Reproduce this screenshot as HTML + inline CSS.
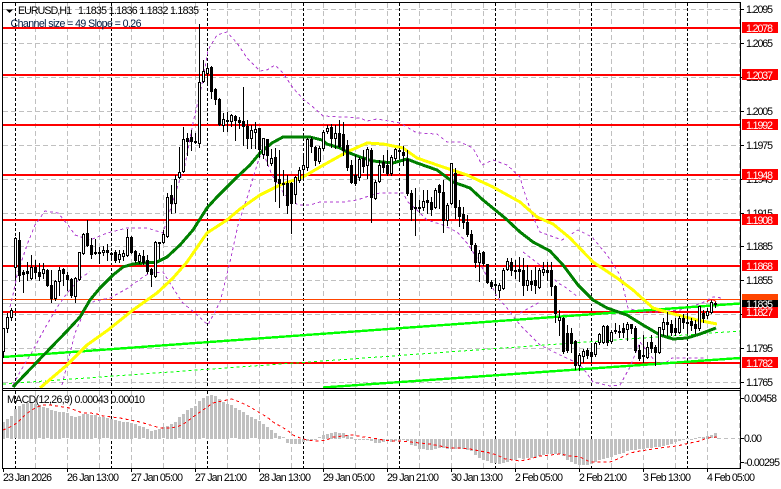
<!DOCTYPE html>
<html><head><meta charset="utf-8"><style>
html,body{margin:0;padding:0;background:#fff;width:781px;height:489px;overflow:hidden}
svg{display:block;font-family:"Liberation Sans",sans-serif;font-size:10.6px}
</style></head><body>
<svg id="s" width="781" height="489" viewBox="0 0 781 489" xmlns="http://www.w3.org/2000/svg">
<rect width="781" height="489" fill="#fff"/>
<g id="grid" shape-rendering="crispEdges"></g>
<g fill="#f00" shape-rendering="crispEdges">
<rect x="3" y="27" width="738" height="2"/><rect x="3" y="74" width="738" height="2"/>
<rect x="3" y="124" width="738" height="2"/><rect x="3" y="174" width="738" height="2"/>
<rect x="3" y="219" width="738" height="2"/><rect x="3" y="265" width="738" height="2"/>
<rect x="3" y="311" width="738" height="2"/><rect x="3" y="362" width="738" height="2"/>
</g>
<rect x="3" y="299" width="737" height="1" fill="#ff4500" shape-rendering="crispEdges"/>
<rect x="3" y="303" width="737" height="1" fill="#c0c0c0" shape-rendering="crispEdges"/>
<g fill="none" stroke="#b03fd0" stroke-width="1" stroke-dasharray="3 3" shape-rendering="crispEdges">
<polyline points="10,307 13,295 17,275 27,245 35,225 45,211 58,213 68,225 75,235 90,240 107,233 127,228 147,228 163,233 177,188 185,165 193,123 203,80 208,50 217,35 227,32 237,43 247,58 260,71 267,70 275,65 283,73 293,88 303,99 313,107 323,116 343,117 360,118 367,121 377,119 400,123 417,133 437,134 447,142 460,142 473,148 482,165 493,160 507,165 520,177 523,188 533,217 540,232 562,240 578,230 592,237 607,255 620,275 625,295 628,308 640,312 660,312 680,310 702,303 713,297 722,298"/>
<polyline points="13,385 20,372 32,352 45,328 58,306 68,292 80,278 90,272"/>
<polyline points="62,385 75,333 87,305 95,301 110,298 128,288 143,277 150,273 163,272 173,288 182,302 197,315 208,325 220,302 230,262 238,225 248,195 257,165 262,150 272,175 285,195 298,205 310,205 320,202 343,202 357,200 372,195 380,193 403,193 408,202 417,210 427,220 443,225 457,232 467,243 477,258 490,282 497,297 507,308 520,325 540,345 560,355 575,362 583,368 593,382 610,386 620,385 630,367 640,342 650,355 657,363 667,362 672,358 693,358 705,358"/>
<polyline points="523,252 540,265 558,283 565,287 578,297"/>
<polyline points="520,313 540,302"/>
</g>
<g fill="none" stroke="#00ff00" shape-rendering="crispEdges">
<line x1="3" y1="357" x2="740" y2="303.5" stroke-width="2.4"/>
<line x1="323" y1="387.5" x2="740" y2="358" stroke-width="2.4"/>
<line x1="3" y1="384" x2="740" y2="331" stroke-width="1" stroke-dasharray="3 3"/>
</g>
<polyline fill="none" stroke="#ffff00" stroke-width="3" shape-rendering="crispEdges" points="40,388 67,365 87,345 108,330 133,310 157,293 173,278 187,262 207,233 227,220 240,209 260,195 280,185 303,177 320,167 347,152 367,143 383,144 403,148 417,158 440,166 467,175 493,187 520,202 537,217 553,224 570,238 593,262 617,278 633,290 653,308 670,313 697,320 717,324"/>
<polyline fill="none" stroke="#008000" stroke-width="3" shape-rendering="crispEdges" points="13,387 37,362 67,331 80,317 90,300 100,288 113,275 123,267 133,264 157,262 167,257 180,245 193,230 207,208 217,197 237,177 250,165 260,153 272,143 283,137 310,137 322,140 327,144 340,148 347,152 360,157 373,161 393,163 407,159 417,163 437,170 453,182 470,188 483,200 505,218 520,232 533,242 550,251 563,265 578,285 593,300 607,308 627,315 643,325 660,335 673,339 687,338 700,334 716,328"/>
<g id="candles" shape-rendering="crispEdges"></g>
<path d="M707 302 A5 4 0 0 1 716 302" fill="none" stroke="#f00" stroke-width="1"/>
<g id="macd" shape-rendering="crispEdges"></g>
<line x1="717" y1="438.5" x2="740" y2="438.5" stroke="#c0c0c0" stroke-dasharray="4 3" shape-rendering="crispEdges"/>
<polyline fill="none" stroke="#f00" stroke-width="1" stroke-dasharray="3 3" shape-rendering="crispEdges" points="3,430 10,427 17,423 23,417 30,411 37,407 43,405 50,405 57,406 63,407 70,408 77,411 83,413 90,413 97,414 103,416 112,417 120,418 130,420 140,422 150,425 160,428 167,428 177,427 185,423 193,417 203,410 213,403 222,401 232,399 242,403 250,407 260,413 267,417 273,422 280,426 287,430 293,435 300,438 307,440 317,441 327,440 333,437 343,436 353,435 363,437 373,438 383,440 393,441 400,441 410,442 420,443 430,444 440,446 450,448 460,448 470,449 480,451 490,453 497,455 505,459 513,460 520,461 530,459 540,456 550,455 560,454 570,456 580,457 590,462 600,462 610,462 620,458 630,453 640,451 653,449 667,447 677,446 690,443 700,441 707,438 717,437"/>
<g fill="#000" shape-rendering="crispEdges">
<rect x="2" y="2" width="739" height="1"/><rect x="2" y="2" width="1" height="467"/>
<rect x="740" y="2" width="1" height="467"/><rect x="2" y="388" width="739" height="1"/>
<rect x="2" y="390" width="739" height="1"/><rect x="2" y="468" width="739" height="1"/>
</g>
<g id="ticks" fill="#000" shape-rendering="crispEdges"></g>
<polygon points="6,9.5 13,9.5 9.5,13" fill="#000"/>
<g fill="#000">
<text x="18" y="14" textLength="54" lengthAdjust="spacing">EURUSD,H1</text>
<text x="78" y="14" textLength="121" lengthAdjust="spacing">1.1835 1.1836 1.1832 1.1835</text>
<text x="10.5" y="27" textLength="131" lengthAdjust="spacing" fill="#001a40">Channel size = 49 Slope = 0.26</text>
<text x="7" y="403" textLength="138" lengthAdjust="spacing">MACD(12,26,9) 0.00043 0.00010</text>
<text x="746" y="13" textLength="27">1.2095</text>
<text x="746" y="47" textLength="27">1.2065</text>
<text x="746" y="81" textLength="27">1.2035</text>
<text x="746" y="115" textLength="27">1.2005</text>
<text x="746" y="149" textLength="27">1.1975</text>
<text x="746" y="183" textLength="27">1.1945</text>
<text x="746" y="217" textLength="27">1.1915</text>
<text x="746" y="250" textLength="27">1.1885</text>
<text x="746" y="284" textLength="27">1.1855</text>
<text x="746" y="352" textLength="27">1.1795</text>
<text x="746" y="386" textLength="27">1.1765</text>
<text x="744" y="402" textLength="33">0.00458</text>
<text x="744" y="442" textLength="18">0.00</text>
<text x="744" y="466" textLength="36">-0.00295</text>
<text x="3" y="481" textLength="49">23 Jan 2026</text>
<text x="67" y="481" textLength="52">26 Jan 13:00</text>
<text x="131" y="481" textLength="52">27 Jan 05:00</text>
<text x="195" y="481" textLength="52">27 Jan 21:00</text>
<text x="259" y="481" textLength="52">28 Jan 13:00</text>
<text x="323" y="481" textLength="52">29 Jan 05:00</text>
<text x="387" y="481" textLength="52">29 Jan 21:00</text>
<text x="451" y="481" textLength="52">30 Jan 13:00</text>
<text x="515" y="481" textLength="48">2 Feb 05:00</text>
<text x="579" y="481" textLength="48">2 Feb 21:00</text>
<text x="643" y="481" textLength="48">3 Feb 13:00</text>
<text x="707" y="481" textLength="48">4 Feb 05:00</text>
</g>
<g shape-rendering="crispEdges">
<rect x="742" y="294" width="36" height="7" fill="#ff4500"/>
<rect x="742" y="300" width="36" height="9" fill="#000"/>
<rect x="742" y="22" width="36" height="11" fill="#f00"/>
<rect x="742" y="69" width="36" height="11" fill="#f00"/>
<rect x="742" y="119" width="36" height="11" fill="#f00"/>
<rect x="742" y="169" width="36" height="11" fill="#f00"/>
<rect x="742" y="214" width="36" height="11" fill="#f00"/>
<rect x="742" y="260" width="36" height="11" fill="#f00"/>
<rect x="742" y="307" width="36" height="11" fill="#f00"/>
<rect x="742" y="357" width="36" height="11" fill="#f00"/>
</g>
<g fill="#fff">
<text x="746" y="308" textLength="27">1.1835</text>
<text x="746" y="32" textLength="27">1.2078</text>
<text x="746" y="79" textLength="27">1.2037</text>
<text x="746" y="129" textLength="27">1.1992</text>
<text x="746" y="179" textLength="27">1.1948</text>
<text x="746" y="224" textLength="27">1.1908</text>
<text x="746" y="270" textLength="27">1.1868</text>
<text x="746" y="316" textLength="27">1.1827</text>
<text x="746" y="367" textLength="27">1.1782</text>
</g>
</svg>
<script>
var NS="http://www.w3.org/2000/svg";
function el(p,t,a){var e=document.createElementNS(NS,t);for(var k in a)e.setAttribute(k,a[k]);document.getElementById(p).appendChild(e);return e}
[9,43,77,111,145,179,213,246,280,314,348,382].forEach(function(y){el("grid","line",{x1:3,x2:740,y1:y+.5,y2:y+.5,stroke:"#c0c0c0","stroke-dasharray":"5 3"});el("ticks","rect",{x:741,y:y,width:3,height:1})});
[[398],[438],[462]].forEach(function(a){el("ticks","rect",{x:741,y:a[0],width:3,height:1})});
for(var x=35;x<740;x+=32){if((x-15)%96==0)continue;el("grid","line",{x1:x+.5,x2:x+.5,y1:3,y2:388,stroke:"#c0c0c0","stroke-dasharray":"5 3"});el("grid","line",{x1:x+.5,x2:x+.5,y1:391,y2:468,stroke:"#c0c0c0","stroke-dasharray":"5 3"})}
for(var x=3;x<740;x+=64){el("ticks","rect",{x:x,y:469,width:1,height:3})}
for(var x=15;x<740;x+=96){el("grid","line",{x1:x+.5,x2:x+.5,y1:3,y2:388,stroke:"#000","stroke-dasharray":"3 2"});el("grid","line",{x1:x+.5,x2:x+.5,y1:391,y2:468,stroke:"#000","stroke-dasharray":"3 2"})}
var C="328,328,351,357,1;313,317,328,332,1;308,310,317,320,1;237,238,267,278,1;232,240,275,281,0;270,272,274,292,0;262,271,273,280,0;255,267,278,279,1;260,267,272,278,0;263,272,276,280,0;263,269,273,278,1;269,270,285,286,0;270,285,298,302,0;280,281,298,300,1;267,270,281,295,1;268,269,273,285,0;272,275,279,290,0;278,279,295,297,0;277,278,296,302,1;252,252,279,280,1;233,234,253,254,1;220,233,245,246,0;238,245,254,258,0;239,252,253,254,0;247,252,253,263,0;246,250,252,255,1;244,250,252,260,0;252,253,254,260,0;250,252,260,262,0;250,254,259,262,1;250,253,256,260,1;229,237,255,256,1;236,237,252,253,0;250,251,260,262,0;253,255,261,263,1;250,256,262,264,0;255,260,271,273,0;268,269,274,286,0;241,242,276,277,1;242,242,243,258,1;230,234,242,243,1;193,197,236,237,1;185,195,203,213,0;175,179,203,212,1;147,172,177,178,1;127,139,171,172,1;133,138,141,155,0;130,137,141,150,0;133,141,142,143,0;24,82,143,147,1;60,71,81,82,1;65,68,73,85,1;66,67,91,98,0;88,89,99,104,0;98,99,124,125,0;113,119,125,131,1;112,120,121,131,0;114,115,121,126,1;115,116,120,140,0;117,120,122,128,0;87,121,126,145,0;120,126,138,148,0;125,130,138,148,1;122,129,132,148,1;128,128,149,157,0;138,138,154,158,1;139,139,155,165,0;149,158,163,165,1;148,157,181,201,0;150,179,183,207,0;170,183,184,195,1;175,183,205,213,0;182,183,203,233,0;176,177,194,203,1;167,170,180,182,1;153,165,169,180,1;138,139,167,170,1;137,139,146,152,0;146,147,160,165,0;146,148,161,163,1;130,132,148,150,1;125,128,131,133,1;124,127,138,147,0;125,133,138,148,1;120,133,146,147,0;122,134,150,155,0;140,145,167,170,0;160,165,182,183,0;155,175,183,185,0;157,159,177,180,1;150,158,166,172,0;147,149,165,178,1;148,150,197,222,0;180,182,198,199,1;160,165,181,182,1;155,162,167,172,0;150,165,173,175,0;155,157,173,175,1;148,149,158,160,1;148,150,151,158,1;146,152,155,165,0;150,159,193,195,0;190,193,209,220,0;188,207,208,235,0;200,207,208,212,0;190,201,207,210,1;190,200,202,213,0;197,202,209,215,0;188,190,207,208,1;184,185,192,208,0;180,192,220,232,0;203,205,220,225,1;163,163,203,204,1;168,173,207,218,0;200,207,216,226,0;207,214,222,228,0;215,222,234,236,0;230,234,244,250,0;243,245,262,267,0;250,253,262,281,1;251,252,263,265,0;264,264,282,283,0;280,282,286,288,0;278,284,285,293,0;283,285,290,297,1;268,270,288,289,1;258,261,269,270,1;258,262,270,275,0;260,270,271,278,0;257,269,271,281,0;258,270,285,295,0;265,280,285,290,1;270,281,284,290,0;267,280,285,293,0;268,270,287,288,1;262,269,272,275,1;262,270,272,280,0;262,270,286,295,0;285,286,313,322,0;310,317,320,335,1;317,318,351,353,0;325,333,350,352,0;328,333,343,352,0;340,341,365,369,0;353,355,365,370,1;349,351,356,362,1;348,350,355,358,0;345,352,356,362,0;342,343,354,356,1;333,334,342,344,1;325,326,342,343,1;325,326,342,345,0;330,332,341,343,1;323,330,331,333,0;325,331,332,337,0;323,328,332,337,0;322,324,329,340,1;324,324,328,333,0;326,328,350,352,0;345,350,358,360,0;335,355,356,362,0;342,347,357,358,1;335,342,348,352,0;345,347,352,365,0;327,327,352,353,1;318,322,329,335,1;312,322,324,335,0;320,324,332,335,0;318,328,332,335,0;316,318,332,333,1;314,318,322,328,0;313,322,323,333,0;318,321,325,330,0;320,324,328,333,0;306,306,328,330,1;310,313,318,322,0;308,311,315,318,1;300,302,312,313,1;301,303,304,307,0";
C.split(";").forEach(function(r,i){var d=r.split(",").map(Number),x=3+4*i;
el("candles","rect",{x:x,y:d[0],width:1,height:d[3]-d[0]+1,fill:"#000"});
el("candles","rect",{x:x-1,y:d[1],width:3,height:Math.max(d[2]-d[1]+1,1),fill:"#000"});
if(d[4]&&d[2]-d[1]>1)el("candles","rect",{x:x,y:d[1]+1,width:1,height:d[2]-d[1]-1,fill:"#fff"});
});
var M=[275,268,258,238,228,222,218,218,222,226,230,235,240,243,245,247,250,257,260,257,252,252,254,256,260,262,265,266,270,273,276,275,278,283,288,292,297,303,300,297,292,288,282,275,262,252,240,234,228,213,205,197,195,198,206,215,222,226,235,240,246,255,262,268,272,
282,290,300,310,318,322,338,342,342,342,336,332,326,326,322,315,312,308,306,308,310,315,320,330,330,328,328,332,338,338,335,333,334,332,330,328,332,344,348,355,356,358,360,356,352,354,355,355,356,356,356,358,362,375,382,388,392,397,398,400,398,394,390,388,384,
386,384,382,382,378,375,372,372,372,372,378,388,395,400,404,405,404,400,395,390,385,382,380,375,372,368,362,358,358,356,355,352,352,350,350,347,343,340,335,332,328,325,326,325,322,320,318,316,310];
M.forEach(function(v,i){var a=Math.min(v,326),b=Math.max(v,326),h=(b-a)/3;
el("macd","rect",{x:2+4*i,y:Math.round(330+a/3),width:3,height:Math.max(Math.round(h),1),fill:"#c0c0c0"})});
</script>
</body></html>
